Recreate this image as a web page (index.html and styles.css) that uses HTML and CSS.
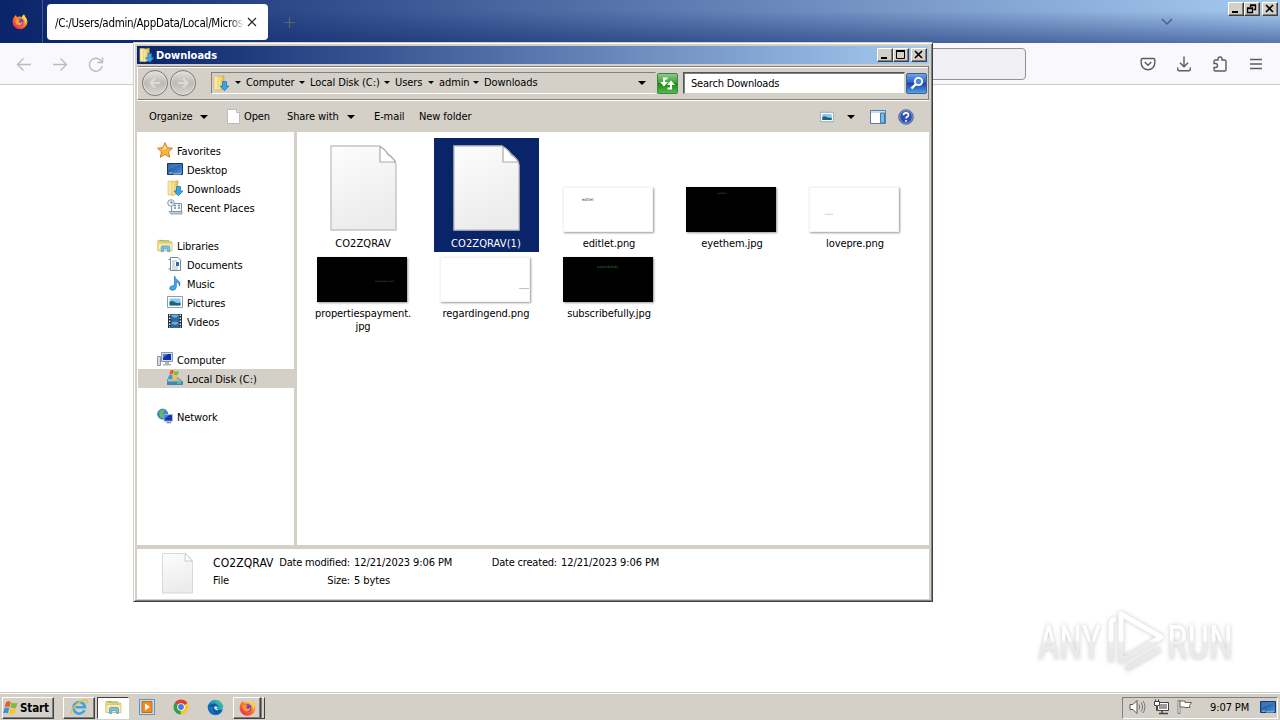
FILE: index.html
```
<!DOCTYPE html>
<html lang="en">
<head>
  <meta charset="UTF-8" />
  <title>Downloads</title>
  <link rel="stylesheet" href="styles.css">
</head>
<body>
  <!-- shared icons -->
  <svg class="defs" width="0" height="0">
    <defs>
      <linearGradient id="gPaper" x1="0" y1="0" x2="0.3" y2="1"><stop offset="0" stop-color="#fdfdfd"/><stop offset="1" stop-color="#ececec"/></linearGradient>
      <linearGradient id="gFolder" x1="0" y1="0" x2="1" y2="0"><stop offset="0" stop-color="#fbf0ae"/><stop offset="1" stop-color="#e3b640"/></linearGradient>
      <linearGradient id="gScreen" x1="0" y1="0" x2="1" y2="1"><stop offset="0" stop-color="#123d88"/><stop offset="1" stop-color="#4e9ae0"/></linearGradient>
      <linearGradient id="gFox" x1="1" y1="0" x2="0.2" y2="1"><stop offset="0" stop-color="#ffe14a"/><stop offset="0.45" stop-color="#ff8a20"/><stop offset="1" stop-color="#ee2450"/></linearGradient>
      <linearGradient id="gEdge" x1="0" y1="1" x2="1" y2="0"><stop offset="0" stop-color="#0c50a0"/><stop offset="0.5" stop-color="#1b8fd4"/><stop offset="1" stop-color="#59d867"/></linearGradient>
      <linearGradient id="gMark" gradientUnits="userSpaceOnUse" x1="0" y1="10" x2="0" y2="66"><stop offset="0" stop-color="#fff"/><stop offset="0.5" stop-color="#fff"/><stop offset="0.55" stop-color="#ededed"/><stop offset="1" stop-color="#e6e6e6"/></linearGradient>
    </defs>
    <symbol id="i-downloads" viewBox="0 0 16 16">
      <path d="M1 1h5v14H1z" fill="#f9e9a2" stroke="#d8b75a" stroke-width=".6"/>
      <path d="M5 2l6-1.500V14l-6 1.500z" fill="url(#gFolder)" stroke="#d0a640" stroke-width=".5"/>
      <path d="M9.500 6.500h4v4.500H16l-4.500 4.800L7 11h2.500z" fill="#38a3ea" stroke="#1672b8" stroke-width=".7"/>
    </symbol>
    <symbol id="i-folder" viewBox="0 0 17 15">
      <path d="M1 2h5l1 1.500h8.500V13H1z" fill="#f3dc80" stroke="#d2ad4d" stroke-width=".8"/>
      <path d="M3 2.500h10" stroke="#69b65e"/>
      <path d="M1 5h15v8H1z" fill="#faeca6" stroke="#d8ba62" stroke-width=".7"/>
      <path d="M4.500 14V9.500q0-1.500 1.500-1.500h6q1.500 0 1.500 1.500V14h-2.200v-3H6.700v3z" fill="#79bfe9" stroke="#4493c8" stroke-width=".7"/>
    </symbol>
    <symbol id="i-firefox" viewBox="0 0 16 16">
      <path d="M15.300 7.500C15 4.500 13 3.700 12 1c-1.500 1-2 2-2 3C8 2.500 6.500 3 5.500 3.700 4.500 3.200 4 2.200 4 1.500 2 3 .600 5.500.600 8.300a7.400 7.400 0 0 0 14.800 0z" fill="url(#gFox)"/>
      <circle cx="8" cy="8.600" r="3.600" fill="#7a3fd0"/>
      <path d="M3.500 6.200c1.800-1.400 3.600-.8 4.700.5-1.700.3-1.800 1.400-1 2 1.400 1 2.800.2 3.500-.6.400 3.200-2.700 4.600-4.800 3.500C4 10.600 3.300 8.500 3.500 6.200z" fill="#ff9a28"/>
      <path d="M10 4c3 1.500 3.800 4 2.800 6.200 1-.5 2-2 1.800-4C14 4 12.500 3 12 1c-1.500 1-2 2-2 3z" fill="#ffd83e"/>
    </symbol>
    <symbol id="i-file" viewBox="0 0 67 87">
      <path d="M1 1h48q7 5 9 8 7 5 8 11v65H1z" fill="url(#gPaper)" stroke="#c4c4c4" stroke-width="1.400"/>
      <path d="M50 1.500v15.500h15.500Q64 14 58 9.500 55 4 50 1.500z" fill="#fff" stroke="#aaa" stroke-width="1.200"/>
    </symbol>
    <symbol id="i-monitor" viewBox="0 0 16 16">
      <path d="M.500 2.500h15v11H.500z" fill="url(#gScreen)" stroke="#17396e"/>
      <path d="M1 3h14L1 9z" fill="#6ba0dd" opacity=".4"/>
      <path d="M2 12h3M6 13h8" stroke="#c6e4fb" stroke-width=".8"/>
    </symbol>
    <symbol id="i-picture" viewBox="0 0 16 14">
      <path d="M.500 1.500h15v11H.500z" fill="#fff" stroke="#8c9db0"/>
      <path d="M2.500 3.500h11v7h-11z" fill="#8ccbf0"/>
      <path d="M2.500 7q3-2 5 0 3 1.500 6 .5v3h-11z" fill="#1d6476"/>
    </symbol>
    <symbol id="i-winflag" viewBox="0 0 16 16">
      <path d="M3.200 2q2-1.500 4.600 0L6.500 7.200q-2-1.300-4.800 0z" fill="#ee5a24"/>
      <path d="M8.600 2.500q2.300 1.300 6 .3L13 8Q9.800 8.900 7.400 7.600z" fill="#7dbb38"/>
      <path d="M1.400 8.200q2.500-1.300 4.800 0L4.900 13.300q-2.200-1.300-4.900 0z" fill="#3d90dc"/>
      <path d="M7 8.500q2.500 1.300 5.800.4l-1.500 5.200q-3 .8-5.700-.4z" fill="#fbc22d"/>
    </symbol>
  </svg>

  <div class="browser">
    <div class="tabbar">
      <div class="fox"><svg width="16" height="17"><use href="#i-firefox"/></svg></div>
      <div class="tab">
        <span class="tab-title">/C:/Users/admin/AppData/Local/Microso</span>
        <svg class="tab-close" width="10" height="10" viewBox="0 0 10 10"><path d="M1 1l8 8M9 1L1 9" stroke="#222" stroke-width="1.200"/></svg>
      </div>
      <svg class="plus" width="13" height="13" viewBox="0 0 13 13"><path d="M6.500 1v11M1 6.500h11" stroke="#5b6475" stroke-width="1.200"/></svg>
      <svg class="tabs-menu" width="12" height="8" viewBox="0 0 12 8"><path d="M1 1l5 5 5-5" fill="none" stroke="#45618c" stroke-width="1.500"/></svg>
      <div class="win-buttons">
        <button class="wb"><svg width="14" height="12"><path d="M3 9h6" stroke="#000" stroke-width="2"/></svg></button>
        <button class="wb"><svg width="14" height="12"><path d="M5.500 4V2.500h5v4H8.500M5 2h6" fill="none" stroke="#000" stroke-width="1.300"/><path d="M2.500 5.500h5v4h-5zM2 5h6" fill="none" stroke="#000" stroke-width="1.300"/></svg></button>
        <button class="wb close"><svg width="14" height="12"><path d="M3 2l7 7M10 2L3 9" stroke="#000" stroke-width="1.600"/></svg></button>
      </div>
    </div>

    <div class="navbar">
      <svg width="16" height="16" viewBox="0 0 16 16"><path d="M15 8.500H1.500M7.500 2.500l-6 6 6 6" class="pale"/></svg>
      <svg width="16" height="16" viewBox="0 0 16 16"><path d="M1 8.500h13.500M8.500 2.500l6 6-6 6" class="pale"/></svg>
      <svg width="16" height="16" viewBox="0 0 16 16"><path d="M13.600 5.500A6.500 6.500 0 1 0 14.300 10M14.500 1.500v5h-5" class="pale"/></svg>
      <div class="urlbar"></div>
      <div class="nav-icons">
        <svg width="16" height="16" viewBox="0 0 16 16"><path d="M2.500 2.500h11q1.300 0 1.300 1.300V7A6.800 6.800 0 0 1 1.200 7V3.800q0-1.300 1.300-1.300zM4.700 6L8 9.200 11.300 6" class="dark"/></svg>
        <svg width="16" height="16" viewBox="0 0 16 16"><path d="M8 .5v10M4 6.800l4 4 4-4M1.700 11.500v1.700q0 1.500 1.500 1.500h9.600q1.500 0 1.500-1.500v-1.700" class="dark"/></svg>
        <svg width="16" height="16" viewBox="0 0 16 16"><path d="M2 5.500q0-1.500 1.500-1.500H6V3a2 2 0 0 1 4 0v1h2.500Q14 4 14 5.500v8q0 1.500-1.500 1.500h-9Q2 15 2 13.500V11.500h1.500a2 2 0 0 0 0-4H2z" class="dark"/></svg>
        <svg width="16" height="16" viewBox="0 0 16 16"><path d="M2 3.500h12M2 8h12M2 12.500h12" class="dark"/></svg>
      </div>
    </div>
    <div class="page"></div>
  </div>

  <svg class="watermark" width="210" height="76" viewBox="0 0 210 76">
    <g fill="url(#gMark)">
      <text x="8" y="57" textLength="63" lengthAdjust="spacingAndGlyphs">ANY</text>
      <text x="137" y="57" textLength="66" lengthAdjust="spacingAndGlyphs">RUN</text>
    </g>
    <g fill="none" stroke="url(#gMark)" stroke-width="5" stroke-linejoin="round">
      <path d="M91 12l40 23-40 24z"/>
      <path d="M86 18q-5-1-5 4v38M96 67l34-20"/>
    </g>
  </svg>

  <div class="window">
    <div class="titlebar">
      <svg width="15" height="16"><use href="#i-downloads"/></svg>
      <span>Downloads</span>
      <div class="win-buttons">
        <button class="wb"><svg width="14" height="12"><path d="M3 9h6" stroke="#000" stroke-width="2"/></svg></button>
        <button class="wb"><svg width="14" height="12"><path d="M2.500 2v7.500h8V2" fill="none" stroke="#000"/><path d="M2 2h9" stroke="#000" stroke-width="2"/></svg></button>
        <button class="wb close"><svg width="14" height="12"><path d="M3 2l7 7M10 2L3 9" stroke="#000" stroke-width="1.600"/></svg></button>
      </div>
    </div>

    <div class="addressbar">
      <div class="round"><svg width="14" height="14" viewBox="0 0 14 14"><path d="M12 7H3M7 2.500L2.500 7 7 11.500"/></svg></div>
      <div class="round"><svg width="14" height="14" viewBox="0 0 14 14"><path d="M2 7h9M7 2.500L11.500 7 7 11.500"/></svg></div>
      <div class="path">
        <svg class="path-icon" width="16" height="16"><use href="#i-downloads"/></svg>
        <i class="arrow small"></i><span class="c1">Computer</span>
        <i class="arrow small"></i><span class="c2">Local Disk (C:)</span>
        <i class="arrow small"></i><span class="c3">Users</span>
        <i class="arrow small"></i><span class="c4">admin</span>
        <i class="arrow small"></i><span>Downloads</span>
        <i class="arrow last"></i>
      </div>
      <div class="refresh"><svg width="19" height="19" viewBox="0 0 19 19"><path d="M2 8h8L6 12.500zM9 11h8l-4-4.500z" fill="#fff"/><path d="M6 8.500V4.500h3.500M13 10.500v4H9.500" fill="none" stroke="#fff" stroke-width="2"/></svg></div>
      <div class="search">Search Downloads</div>
      <div class="go"><svg width="19" height="19" viewBox="0 0 19 19"><circle cx="11.500" cy="7.500" r="3.700" fill="#4c86d6" stroke="#fff" stroke-width="1.800"/><path d="M8.500 10.500L4.500 14.500" stroke="#fff" stroke-width="2.400"/></svg></div>
    </div>

    <div class="commands">
      <span class="m1">Organize</span><i class="arrow"></i>
      <svg class="cmd-file" width="13" height="15" viewBox="0 0 13 15"><path d="M.5.500h9l3 3v11H.500z" fill="#fff" stroke="#bbb"/><path d="M9.500.500v3h3" fill="#eee" stroke="#bbb"/></svg>
      <span class="m2">Open</span>
      <span class="m3">Share with</span><i class="arrow"></i>
      <span class="m4">E-mail</span>
      <span>New folder</span>
      <div class="views">
        <svg width="14" height="12" viewBox="0 0 16 14"><use href="#i-picture"/></svg>
        <i class="arrow"></i>
        <svg class="pane-icon" width="16" height="14" viewBox="0 0 16 14"><path d="M.500.500h15v13H.500z" fill="#fff" stroke="#5b7ea8"/><path d="M1 2h14" stroke="#9cbad8"/><path d="M10.500 3h4v10h-4z" fill="#74bfe5" stroke="#3d7caa"/></svg>
        <svg class="help-icon" width="16" height="16" viewBox="0 0 16 16"><circle cx="8" cy="8" r="7.300" fill="#2c51ad" stroke="#5b6d99"/><circle cx="8" cy="8" r="6.300" fill="none" stroke="#94aede" stroke-width=".8"/><path d="M5.500 6.200Q5.500 3.800 8 3.800t2.500 2.100Q10.500 7 9.200 7.800 8 8.500 8 9.600M8 11v1.800" fill="none" stroke="#fff" stroke-width="1.700"/></svg>
      </div>
    </div>

    <div class="main">
      <div class="sidebar">
        <div class="row head"><svg width="16" height="16" viewBox="0 0 16 16"><path d="M8 .7l2.200 5 5.300.5-4 3.600 1.200 5.400L8 12.400l-4.700 2.800 1.200-5.400-4-3.600 5.300-.5z" fill="#fbb43c" stroke="#d9792b"/><path d="M8 3l1.300 3.500L5 8z" fill="#ffe69a"/></svg>Favorites</div>
        <div class="row"><svg width="16" height="16"><use href="#i-monitor"/></svg>Desktop</div>
        <div class="row"><svg width="16" height="16"><use href="#i-downloads"/></svg>Downloads</div>
        <div class="row"><svg width="16" height="16" viewBox="0 0 16 16"><path d="M4.500 4.500h10v8h-10z" fill="#f6f8f9" stroke="#84919a"/><path d="M2 12.500h13v2.500H4z" fill="#c4cdd2" stroke="#84919a" stroke-width=".8"/><path d="M7 6.500h2M11 6.500h2M7 9h2M11 9h2" stroke="#5593bd" stroke-width="1.400"/><circle cx="4" cy="4" r="3.300" fill="#eef2f4" stroke="#8d9ba4"/><path d="M4 2v2h1.700" fill="none" stroke="#555" stroke-width=".8"/></svg>Recent Places</div>
        <div class="gap"></div>
        <div class="row head"><svg width="16" height="15"><use href="#i-folder"/></svg>Libraries</div>
        <div class="row"><svg width="16" height="16" viewBox="0 0 16 16"><path d="M3.500 1.500H11l2.500 2.500v10.500h-10z" fill="#fff" stroke="#75889a"/><path d="M1.500 3.500h2M1.500 13h2" stroke="#75889a"/><path d="M5 5h5M5 7h3M5 9h3M5 11h6M5 13h6" stroke="#94a8bb" stroke-width=".8"/><path d="M9 6h3v4H9z" fill="#2870aa"/></svg>Documents</div>
        <div class="row"><svg width="16" height="16" viewBox="0 0 16 16"><path d="M7.500 1q.5 3 3.500 4.500 3.300 2 1.500 5.500.3-3-3.200-4.300V12q-.3 3-3.500 3.300-3 0-3.200-2 .3-2.600 4.900-2.800z" fill="#46a8e8" stroke="#1c73b9" stroke-width=".7"/></svg>Music</div>
        <div class="row"><svg width="16" height="14"><use href="#i-picture"/></svg>Pictures</div>
        <div class="row"><svg width="16" height="16" viewBox="0 0 16 16"><path d="M1 1h14v14H1z" fill="#252f3c"/><path d="M4.500 1.500h7v6h-7zM4.500 8.500h7v6h-7z" fill="#5faee9"/><path d="M4.500 5q2-2 3 0 2 0 4-2v4.500h-7zM4.500 12q2-2 3 0 2 0 4-2v4.500h-7z" fill="#2b67a5"/><path d="M2.700 1.500v13M13.300 1.500v13" stroke="#fff" stroke-width="1.300" stroke-dasharray="1.500 1.500"/></svg>Videos</div>
        <div class="gap"></div>
        <div class="row head"><svg width="16" height="16" viewBox="0 0 16 16"><path d="M.500 5.500h3v9h-3z" fill="#d6dce2" stroke="#8d98a4"/><path d="M4.500 1.500h11v9h-11z" fill="#d3dce8" stroke="#8b98ac"/><path d="M6 3h8v6H6z" fill="#1231a8"/><path d="M6 3h5L6 7z" fill="#5278dc"/><path d="M8 11h4v2H8zM6 13h8v1.500H6z" fill="#a9b4c1"/></svg>Computer</div>
        <div class="row current"><svg width="16" height="16" viewBox="0 0 16 16"><path d="M0 10l2-2h9l4.500 3.500v3H0z" fill="#9cc1d3" stroke="#4b7c96" stroke-width=".8"/><path d="M0 11.500h15.500v3.500H0z" fill="#4486aa"/><path d="M10 13h4" stroke="#71ef61"/><svg x="1" y="-1" width="12" height="12"><use href="#i-winflag"/></svg></svg>Local Disk (C:)</div>
        <div class="gap"></div>
        <div class="row head"><svg width="16" height="16" viewBox="0 0 17 16"><circle cx="6" cy="6" r="5.300" fill="#2d93c3" stroke="#3779a8"/><path d="M2 4q3-4 6-2L6 5l1 4-3 1z" fill="#65bb64"/><path d="M7.500 6.500h9v7h-9z" fill="#1436b5" stroke="#b5c1d5"/><path d="M8 7h5l-5 4z" fill="#587de0"/><path d="M10 15h5" stroke="#8090a4" stroke-width="1.500"/></svg>Network</div>
      </div>

      <div class="files">
        <div class="file"><div class="thumb"><svg width="67" height="87"><use href="#i-file"/></svg></div><span class="caps">CO2ZQRAV</span></div>
        <div class="file selected"><div class="thumb"><svg width="67" height="87"><use href="#i-file"/></svg></div><span class="caps">CO2ZQRAV(1)</span></div>
        <div class="file"><div class="thumb"><div class="pic"><b class="t-editlet">editlet</b></div></div><span>editlet.png</span></div>
        <div class="file"><div class="thumb"><div class="pic black"><b class="t-eyethem">eyethem</b></div></div><span>eyethem.jpg</span></div>
        <div class="file"><div class="thumb"><div class="pic"><b class="t-lovepre">lovepre</b></div></div><span>lovepre.png</span></div>
        <div class="file"><div class="thumb"><div class="pic black"><b class="t-properties">propertiespayment</b></div></div><span>propertiespayment.<br>jpg</span></div>
        <div class="file"><div class="thumb"><div class="pic"><b class="t-regarding">regardingend</b></div></div><span>regardingend.png</span></div>
        <div class="file"><div class="thumb"><div class="pic black"><b class="t-subscribe">subscribefully</b></div></div><span>subscribefully.jpg</span></div>
      </div>
    </div>

    <div class="details">
      <svg width="31" height="41" viewBox="0 0 67 87" preserveAspectRatio="none"><use href="#i-file"/></svg>
      <div class="info">
        <span class="name">CO2ZQRAV</span><span class="label">Date modified:</span><span>12/21/2023 9:06 PM</span><span class="label">Date created:</span><span>12/21/2023 9:06 PM</span>
        <span>File</span><span class="label">Size:</span><span>5 bytes</span>
      </div>
    </div>
  </div>

  <div class="taskbar">
    <div class="start"><svg width="16" height="16"><use href="#i-winflag"/></svg>Start</div>
    <div class="task raised"><svg width="18" height="18" viewBox="0 0 18 18"><path d="M14.500 12.300A5.800 5.800 0 1 1 15 9.300H5.500" fill="none" stroke="#3ca5df" stroke-width="2.500"/><path d="M2.500 15.500Q-1 15 4 9T15 2q3.500-.5 1.500 3.500" fill="none" stroke="#e9bd3e" stroke-width="1.300"/></svg></div>
    <div class="task pressed"><svg width="17" height="16"><use href="#i-folder"/></svg></div>
    <div class="task"><svg width="16" height="16" viewBox="0 0 16 16"><path d="M.500.500h15v15H.500z" fill="#c1e1f5" stroke="#5495c4"/><path d="M3 2.500h10v11H3z" fill="#f38a1c" stroke="#ca691a"/><path d="M6 4.500l5 3.500-5 3.500z" fill="#fff"/></svg></div>
    <div class="task"><svg width="16" height="16" viewBox="0 0 16 16"><path d="M8 8L1.500 4.300A7.500 7.500 0 0 1 14.500 4.300z" fill="#df3f32"/><path d="M8 8L1.500 4.300A7.500 7.500 0 0 0 7.800 15.500z" fill="#2f9f4c"/><path d="M8 8l6.500-3.700A7.500 7.500 0 0 1 7.800 15.500z" fill="#fbc62d"/><circle cx="8" cy="8" r="3.800" fill="#fff"/><circle cx="8" cy="8" r="2.900" fill="#3e7fe5"/></svg></div>
    <div class="task"><svg width="17" height="17" viewBox="0 0 17 17"><circle cx="8.500" cy="8.500" r="7.800" fill="url(#gEdge)"/><path d="M1 9q1-4.500 6-4.500 3.500.2 4 3.300-.2 1.200-1.300 2 2 1.500 6 .5-1.500 4-5.700 5Q5 14 6 9 3.500 6.500 1 9z" fill="#12589f"/><path d="M7 8q2-1.800 3.500.2-.3 1-1 1.600 2.300 2 6 .4 1.500-2 .5-3 .5 4-6.500 4Q7 10.500 7 8z" fill="#d4efe7"/></svg></div>
    <div class="task raised fx"><svg width="17" height="17"><use href="#i-firefox"/></svg></div>
    <div class="stack"></div>
    <div class="tray">
      <svg width="17" height="16" viewBox="0 0 17 16"><path d="M1 5.500h3l4-4v13l-4-4H1z" fill="#fff" stroke="#555"/><path d="M10 5.500q1.700 2.500 0 5M12 3.500q3.200 4.500 0 9M14 2q4 6 0 12" fill="none" stroke="#777"/></svg>
      <svg class="t2" width="17" height="16" viewBox="0 0 17 16"><path d="M4.500 3.500h11v8h-11z" fill="#9b9b9b" stroke="#444"/><path d="M5.500 4.500h9v6h-9z" fill="none" stroke="#fff"/><path d="M6 14.500h9M9 12v2" stroke="#444" stroke-width="1.500"/><path d="M1.500 2.500h5v4h-2v5h-1v-5h-2zM2.500.500v2M5.500.500v2" fill="#fff" stroke="#444"/></svg>
      <svg class="t3" width="17" height="16" viewBox="0 0 17 16"><path d="M2 1.500h2v13H2z" fill="#fff" stroke="#666" stroke-width=".8"/><path d="M4 2h5v1.500h6.500l-2 3 .5 2H8.500V8H4z" fill="#fff" stroke="#666"/></svg>
      <span>9:07 PM</span>
      <svg width="16" height="16"><use href="#i-monitor"/></svg>
    </div>
  </div>
</body>
</html>
```
FILE: styles.css
```
* {
  box-sizing: border-box;
}

body {
  margin: 0;
  width: 1280px;
  height: 720px;
  overflow: hidden;
  display: flex;
  flex-direction: column;
  position: relative;
  background: #fff;
  color: #000;
  font-family: "DejaVu Sans Condensed", "DejaVu Sans", sans-serif;
  font-stretch: condensed;
  font-size: 11px;
  letter-spacing: -0.1px;
  white-space: nowrap;
}

svg {
  display: block;
  flex: none;
}

.defs {
  position: absolute;
}

/* browser behind the window */
.browser {
  flex: 1;
  display: flex;
  flex-direction: column;
}

.tabbar {
  height: 43px;
  display: flex;
  align-items: center;
  background: linear-gradient(to bottom, rgba(10, 36, 106, 0) 25%, rgba(10, 36, 106, 0.5) 100%), linear-gradient(to right, #0a246a, #a6caf0);
}

.fox {
  width: 43px;
  height: 43px;
  border-right: 1px solid #40588f;
  padding: 13px 0 0 12px;
}

.tab {
  width: 221px;
  height: 36px;
  margin: 1px 0 0 4px;
  padding-left: 8px;
  display: flex;
  align-items: center;
  background: #fff;
  border-radius: 4px;
}

.tab-title {
  width: 189px;
  font-size: 11.5px;
  letter-spacing: -0.28px;
  line-height: 16px;
  margin-top: 2px;
  overflow: hidden;
  -webkit-mask-image: linear-gradient(to right, #000 175px, transparent);
  mask-image: linear-gradient(to right, #000 175px, transparent);
}

.tab-close {
  margin-left: 3px;
}

.plus {
  margin: 1px 0 0 15px;
}

.tabs-menu {
  margin-left: auto;
  margin-right: 55px;
}

.win-buttons {
  display: flex;
}

.tabbar .win-buttons {
  align-self: flex-start;
  margin: 2px 2px 0 0;
}

.wb {
  width: 16px;
  height: 14px;
  padding: 0;
  background: #d4d0c8;
  border: 1px solid;
  border-color: #fff #404040 #404040 #fff;
  box-shadow: inset -1px -1px #808080;
}

.wb.close {
  margin-left: 2px;
}

.navbar {
  height: 42px;
  display: flex;
  align-items: center;
  gap: 20px;
  padding-left: 16px;
  background: #f9f9fb;
  border-bottom: 1px solid #ccc;
}

.pale {
  fill: none;
  stroke: #bbbbbf;
  stroke-width: 1.4;
}

.dark {
  fill: none;
  stroke: #5b5b66;
  stroke-width: 1.4;
}

.urlbar {
  width: 886px;
  height: 32px;
  margin-left: 16px;
  background: #f0f0f4;
  border: 1px solid #8f8f9d;
  border-radius: 4px;
}

.nav-icons {
  display: flex;
  gap: 20px;
  margin-left: auto;
  margin-right: 16px;
}

/* explorer window */
.window {
  position: absolute;
  left: 133px;
  top: 42px;
  width: 800px;
  height: 560px;
  display: flex;
  flex-direction: column;
  padding: 2px;
  background: #d4d0c8;
  border: 1px solid;
  border-color: #d4d0c8 #404040 #404040 #d4d0c8;
  box-shadow: inset 1px 1px #fff, inset -1px -1px #808080;
}

.titlebar {
  height: 18px;
  margin: 1px 1px 0;
  display: flex;
  align-items: center;
  gap: 2px;
  padding: 0 2px 0 2px;
  background: linear-gradient(to right, #0a246a, #a6caf0);
  color: #fff;
  font-weight: bold;
  letter-spacing: 0;
}

.titlebar .win-buttons {
  margin-left: auto;
}

.addressbar {
  height: 34px;
  margin: 2px 1px 0;
  display: flex;
  align-items: center;
  padding-left: 4px;
  border: 1px solid #808080;
  border-left-color: #fff;
  box-shadow: inset 0 1px #fff, 0 1px #fff;
}

.round {
  width: 26px;
  height: 26px;
  margin-right: 2px;
  display: flex;
  align-items: center;
  justify-content: center;
  border-radius: 50%;
  border: 1px solid #777;
  background: linear-gradient(#e2e1df, #bebbb6 50%, #d7d5d1);
  box-shadow: inset 0 0 0 1px #e4e3e0;
}

.round path {
  fill: none;
  stroke: #dddbd8;
  stroke-width: 2.2;
}

.path {
  width: 445px;
  height: 22px;
  margin-left: 13px;
  padding: 0 0 1px 1px;
  display: flex;
  align-items: center;
  border: 1px solid;
  border-color: #808080 #d4d0c8 #fff #808080;
}

.path-icon {
  margin-right: 6px;
}

.path span {
  margin: 0 4px 0 5px;
}

.path .c1 { width: 49px; }
.path .c2 { width: 70px; }
.path .c3 { width: 29px; }
.path .c4 { width: 30px; }

.arrow {
  width: 0;
  height: 0;
  border: 4px solid transparent;
  border-top-color: #000;
  border-bottom: 0;
}

.arrow.small {
  border-width: 3px 3px 0;
}

.arrow.last {
  margin-left: auto;
  margin-right: 9px;
}

.refresh,
.go {
  width: 21px;
  height: 21px;
  padding: 1px;
  border-radius: 2px;
}

.refresh {
  margin-left: 1px;
  background: linear-gradient(#8fc98a, #3ba338 45%, #148a15 50%, #54bb43);
  border: 1px solid #467f45;
}

.refresh svg,
.go svg {
  margin: -1px;
}

.search {
  width: 222px;
  height: 22px;
  margin: 0 1px 0 5px;
  padding: 0 7px;
  line-height: 21px;
  background: #fff;
  border: 1px solid;
  border-color: #555 #d4d0c8 #d4d0c8 #555;
  box-shadow: inset 1px 1px #808080;
  letter-spacing: -0.2px;
}

.go {
  background: linear-gradient(#6da6e7, #2f5fc0 45%, #1c3fae 50%, #4da5df);
  border: 1px solid #3c5fa0;
}

.commands {
  height: 31px;
  margin: 1px 1px 0;
  padding-left: 12px;
  display: flex;
  align-items: center;
}

.commands .m1 { width: 51px; }
.commands .m2 { width: 43px; }
.commands .m3 { width: 60px; }

.commands .m4 {
  width: 45px;
  margin-left: 19px;
}

.cmd-file {
  margin: 0 4px 0 19px;
}

.views {
  margin-left: auto;
  margin-right: 15px;
  display: flex;
  align-items: center;
  gap: 13px;
}

.pane-icon {
  margin-left: 2px;
}

.help-icon {
  margin-left: -1px;
}

.main {
  height: 413px;
  margin: 0 1px;
  display: flex;
}

.sidebar {
  width: 160px;
  padding: 9px 0 0 1px;
  background: #fff;
  border-right: 3px solid #d4d0c8;
}

.row {
  height: 19px;
  padding: 2px 0 0 29px;
  display: flex;
  align-items: center;
  gap: 4px;
}

.row svg {
  margin-top: -3px;
}

.row.head {
  padding-left: 19px;
}

.row.current {
  background: #d4d0c8;
}

.gap {
  height: 19px;
}

.files {
  flex: 1;
  padding: 6px 0 0 14px;
  display: grid;
  grid-template-columns: repeat(5, 105px);
  grid-template-rows: 114px 80px;
  gap: 5px 18px;
  background: #fff;
}

.file {
  display: flex;
  flex-direction: column;
  align-items: center;
  text-align: center;
  line-height: 13px;
}

.file span {
  margin-right: 1px;
}

.file .caps {
  letter-spacing: 0.1px;
}

.file.selected {
  background: #0a246a;
  color: #fff;
}

.thumb {
  height: 95px;
  margin-bottom: 4px;
  display: flex;
  align-items: flex-end;
}

.thumb svg {
  margin: 0 1px 1px 0;
}

.file:nth-child(n + 6) .thumb {
  height: 46px;
}

/* image thumbnails with a tiny caption inside */
.pic {
  position: relative;
  width: 90px;
  height: 45px;
  margin: 0 3px 1px 0;
  overflow: hidden;
  background: #fff;
  border: 1px solid #f3f3f3;
  box-shadow: 1px 1px 2px #999;
}

.pic.black {
  background: #000;
  border-color: #000;
}

.pic b {
  position: absolute;
  font-size: 4px;
  line-height: 5px;
  letter-spacing: 0;
  font-weight: normal;
}

.t-editlet { left: 18px; top: 9px; color: #333; }
.t-eyethem { left: 30px; top: 3px; color: #555; transform: scale(0.6); transform-origin: 0 50%; }
.t-lovepre { left: 15px; top: 24px; color: #aaa; transform: scale(0.6); transform-origin: 0 50%; }
.t-properties { left: 57px; top: 21px; color: #555; transform: scale(0.55); transform-origin: 0 50%; }
.t-regarding { left: 78px; top: 28px; color: #555; transform: scale(0.45); transform-origin: 0 50%; }
.t-subscribe { left: 33px; top: 6px; color: #1c9033; transform: scale(0.85); transform-origin: 0 50%; }

.details {
  flex: 1;
  margin: 4px 1px 0;
  padding: 4px 0 0 25px;
  display: flex;
  background: #fff;
}

.info {
  margin: 1px 0 0 20px;
  display: grid;
  grid-template-columns: 62px 75px 107px 100px 110px;
  grid-template-rows: 18px 18px;
  line-height: 18px;
}

.info .name {
  font-size: 12px;
  letter-spacing: 0.1px;
}

.info .label {
  text-align: right;
  letter-spacing: -0.2px;
}

.info .label + span {
  padding-left: 4px;
}

/* taskbar */
.taskbar {
  height: 27px;
  padding: 2px 2px 1px;
  display: flex;
  align-items: center;
  background: #d4d0c8;
  border-top: 1px solid #fff;
  box-shadow: 0 -1px #c9c9c6;
}

.start,
.task.raised {
  background: #d4d0c8;
  border: 1px solid;
  border-color: #fff #404040 #404040 #fff;
  box-shadow: inset -1px -1px #808080;
}

.start {
  width: 52px;
  height: 22px;
  margin-right: 9px;
  display: flex;
  align-items: center;
  gap: 1px;
  font-size: 11.5px;
  font-weight: bold;
}

.task {
  width: 32px;
  height: 22px;
  margin-right: 2px;
  display: flex;
  align-items: center;
  justify-content: center;
}

.task svg,
.tray svg {
  margin-top: -1px;
}

.task.pressed {
  background: #fff;
  border: 1px solid;
  border-color: #404040 #fff #fff #404040;
}

.task.fx {
  width: 28px;
  margin-right: 0;
}

.stack {
  width: 4px;
  height: 22px;
  border: 1px solid;
  border-color: #fff #404040 #404040 #808080;
}

.tray {
  height: 22px;
  width: 156px;
  margin-left: auto;
  padding: 0 1px 0 6px;
  display: flex;
  align-items: center;
  border: 1px solid;
  border-color: #808080 #fff #fff #808080;
}

.tray .t2,
.tray .t3 {
  margin-left: 7px;
}

.tray .t3 {
  margin-left: 6px;
}

.tray span {
  margin: 0 auto 0 17px;
}

.watermark {
  position: absolute;
  left: 1030px;
  top: 602px;
  overflow: visible;
  filter: drop-shadow(0 0 2px rgba(0, 0, 0, 0.22));
}

.watermark text {
  font-family: Roboto, sans-serif;
  font-size: 49px;
  letter-spacing: 0;
}
```
